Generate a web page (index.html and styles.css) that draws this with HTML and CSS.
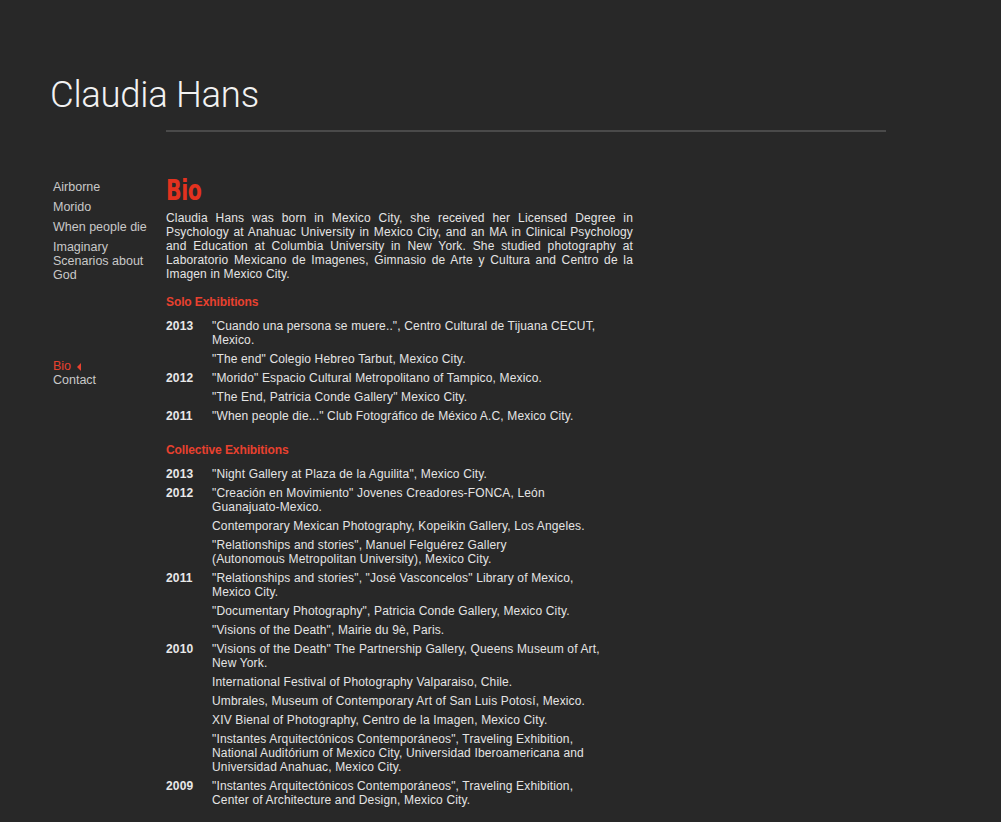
FILE: index.html
```html
<!DOCTYPE html>
<html>
<head>
<meta charset="utf-8">
<title>Claudia Hans</title>
<link rel="stylesheet" href="styles.css">
</head>
<body>
<div class="page">
  <header class="header">
    <h1 class="site-title">Claudia Hans</h1>
    <div class="rule"></div>
  </header>
  <div class="layout">
    <nav class="nav">
      <ul class="nav-group">
        <li><a href="#">Airborne</a></li>
        <li><a href="#">Morido</a></li>
        <li><a href="#">When people die</a></li>
        <li><a href="#">Imaginary Scenarios about God</a></li>
      </ul>
      <ul class="nav-group nav-group-info">
        <li><a href="#" class="active">Bio <span class="arrow"></span></a></li>
        <li><a href="#">Contact</a></li>
      </ul>
    </nav>
    <main class="content">
      <h2 class="page-title">Bio</h2>
      <p class="bio-text">Claudia Hans was born in Mexico City, she received her Licensed Degree in Psychology at Anahuac University in Mexico City, and an MA in Clinical Psychology and Education at Columbia University in New York. She studied photography at Laboratorio Mexicano de Imagenes, Gimnasio de Arte y Cultura and Centro de la Imagen in Mexico City.</p>

      <h3 class="section-title">Solo Exhibitions</h3>
      <ul class="exh-list">
        <li class="exh"><span class="year">2013</span><span class="desc">"Cuando una persona se muere..", Centro Cultural de Tijuana CECUT,<br>Mexico.</span></li>
        <li class="exh"><span class="year"></span><span class="desc">"The end" Colegio Hebreo Tarbut, Mexico City.</span></li>
        <li class="exh"><span class="year">2012</span><span class="desc">"Morido" Espacio Cultural Metropolitano of Tampico, Mexico.</span></li>
        <li class="exh"><span class="year"></span><span class="desc">"The End, Patricia Conde Gallery" Mexico City.</span></li>
        <li class="exh"><span class="year">2011</span><span class="desc">"When people die..." Club Fotográfico de México A.C, Mexico City.</span></li>
      </ul>

      <h3 class="section-title">Collective Exhibitions</h3>
      <ul class="exh-list">
        <li class="exh"><span class="year">2013</span><span class="desc">"Night Gallery at Plaza de la Aguilita", Mexico City.</span></li>
        <li class="exh"><span class="year">2012</span><span class="desc">"Creación en Movimiento" Jovenes Creadores-FONCA, León<br>Guanajuato-Mexico.</span></li>
        <li class="exh"><span class="year"></span><span class="desc">Contemporary Mexican Photography, Kopeikin Gallery, Los Angeles.</span></li>
        <li class="exh"><span class="year"></span><span class="desc">"Relationships and stories", Manuel Felguérez Gallery<br>(Autonomous Metropolitan University), Mexico City.</span></li>
        <li class="exh"><span class="year">2011</span><span class="desc">"Relationships and stories", "José Vasconcelos" Library of Mexico,<br>Mexico City.</span></li>
        <li class="exh"><span class="year"></span><span class="desc">"Documentary Photography", Patricia Conde Gallery, Mexico City.</span></li>
        <li class="exh"><span class="year"></span><span class="desc">"Visions of the Death", Mairie du 9è, Paris.</span></li>
        <li class="exh"><span class="year">2010</span><span class="desc">"Visions of the Death" The Partnership Gallery, Queens Museum of Art,<br>New York.</span></li>
        <li class="exh"><span class="year"></span><span class="desc">International Festival of Photography Valparaiso, Chile.</span></li>
        <li class="exh"><span class="year"></span><span class="desc">Umbrales, Museum of Contemporary Art of San Luis Potosí, Mexico.</span></li>
        <li class="exh"><span class="year"></span><span class="desc">XIV Bienal of Photography, Centro de la Imagen, Mexico City.</span></li>
        <li class="exh"><span class="year"></span><span class="desc">"Instantes Arquitectónicos Contemporáneos", Traveling Exhibition,<br>National Auditórium of Mexico City, Universidad Iberoamericana and<br>Universidad Anahuac, Mexico City.</span></li>
        <li class="exh"><span class="year">2009</span><span class="desc">"Instantes Arquitectónicos Contemporáneos", Traveling Exhibition,<br>Center of Architecture and Design, Mexico City.</span></li>
      </ul>
    </main>
  </div>
</div>
</body>
</html>
```

FILE: styles.css
```css
html, body {
  margin: 0;
  padding: 0;
  background: #282828;
}

body {
  font-family: "Liberation Sans", Arial, sans-serif;
  color: #e4e4e4;
  font-size: 12px;
  line-height: 14px;
}

.page {
  padding: 0 0 0 53px;
  width: 833px;
}

.header {
  padding-top: 73px;
}

.site-title {
  margin: 0 0 0 -3px;
  font-family: Roboto, "Liberation Sans", sans-serif;
  font-weight: 300;
  font-size: 36.5px;
  line-height: 44px;
  color: #f2f2f2;
  letter-spacing: -0.3px;
}

.rule {
  margin: 13px 0 0 113px;
  width: 720px;
  height: 2px;
  background: #4a4a4a;
}

.layout {
  display: grid;
  grid-template-columns: 113px 467px;
  margin-top: 45px;
}

.nav {
  display: flex;
  flex-direction: column;
  gap: 77px;
  padding-top: 3px;
}

.nav-group {
  list-style: none;
  margin: 0;
  padding: 0;
  display: flex;
  flex-direction: column;
  gap: 6px;
  width: 100px;
}

.nav-group-info {
  gap: 0;
}

.nav a {
  color: #c9c9c9;
  text-decoration: none;
  font-size: 12.5px;
  line-height: 14px;
  display: block;
}

.nav a.active {
  color: #e8412f;
}

.arrow {
  display: inline-block;
  width: 0;
  height: 0;
  border-top: 4px solid transparent;
  border-bottom: 4px solid transparent;
  border-right: 4px solid #e8412f;
  margin-left: 2px;
  vertical-align: -0.5px;
}

.content {
  min-width: 0;
  letter-spacing: 0.15px;
}

.page-title {
  margin: -2px 0 0;
  font-family: "Liberation Sans Narrow", "DejaVu Sans Condensed", "Liberation Sans", sans-serif;
  font-weight: 700;
  font-size: 28.5px;
  line-height: 32px;
  color: #e3321f;
  letter-spacing: -0.5px;
  transform: scaleX(0.8);
  transform-origin: left center;
}

.bio-text {
  margin: 4px 0 0;
  text-align: justify;
  color: #e4e4e4;
}

.section-title {
  margin: 14px 0 10px;
  font-size: 12px;
  line-height: 14px;
  font-weight: 700;
  color: #e8412f;
  letter-spacing: -0.1px;
}

.exh-list {
  list-style: none;
  margin: 0 0 20px;
  padding: 0;
  display: flex;
  flex-direction: column;
  gap: 5px;
}

.exh-list:last-child {
  margin-bottom: 0;
}

.exh {
  display: flex;
}

.year {
  flex: 0 0 46px;
  font-weight: 700;
  color: #e8e8e8;
}

.desc {
  flex: 1;
  color: #e4e4e4;
  white-space: nowrap;
}
```
